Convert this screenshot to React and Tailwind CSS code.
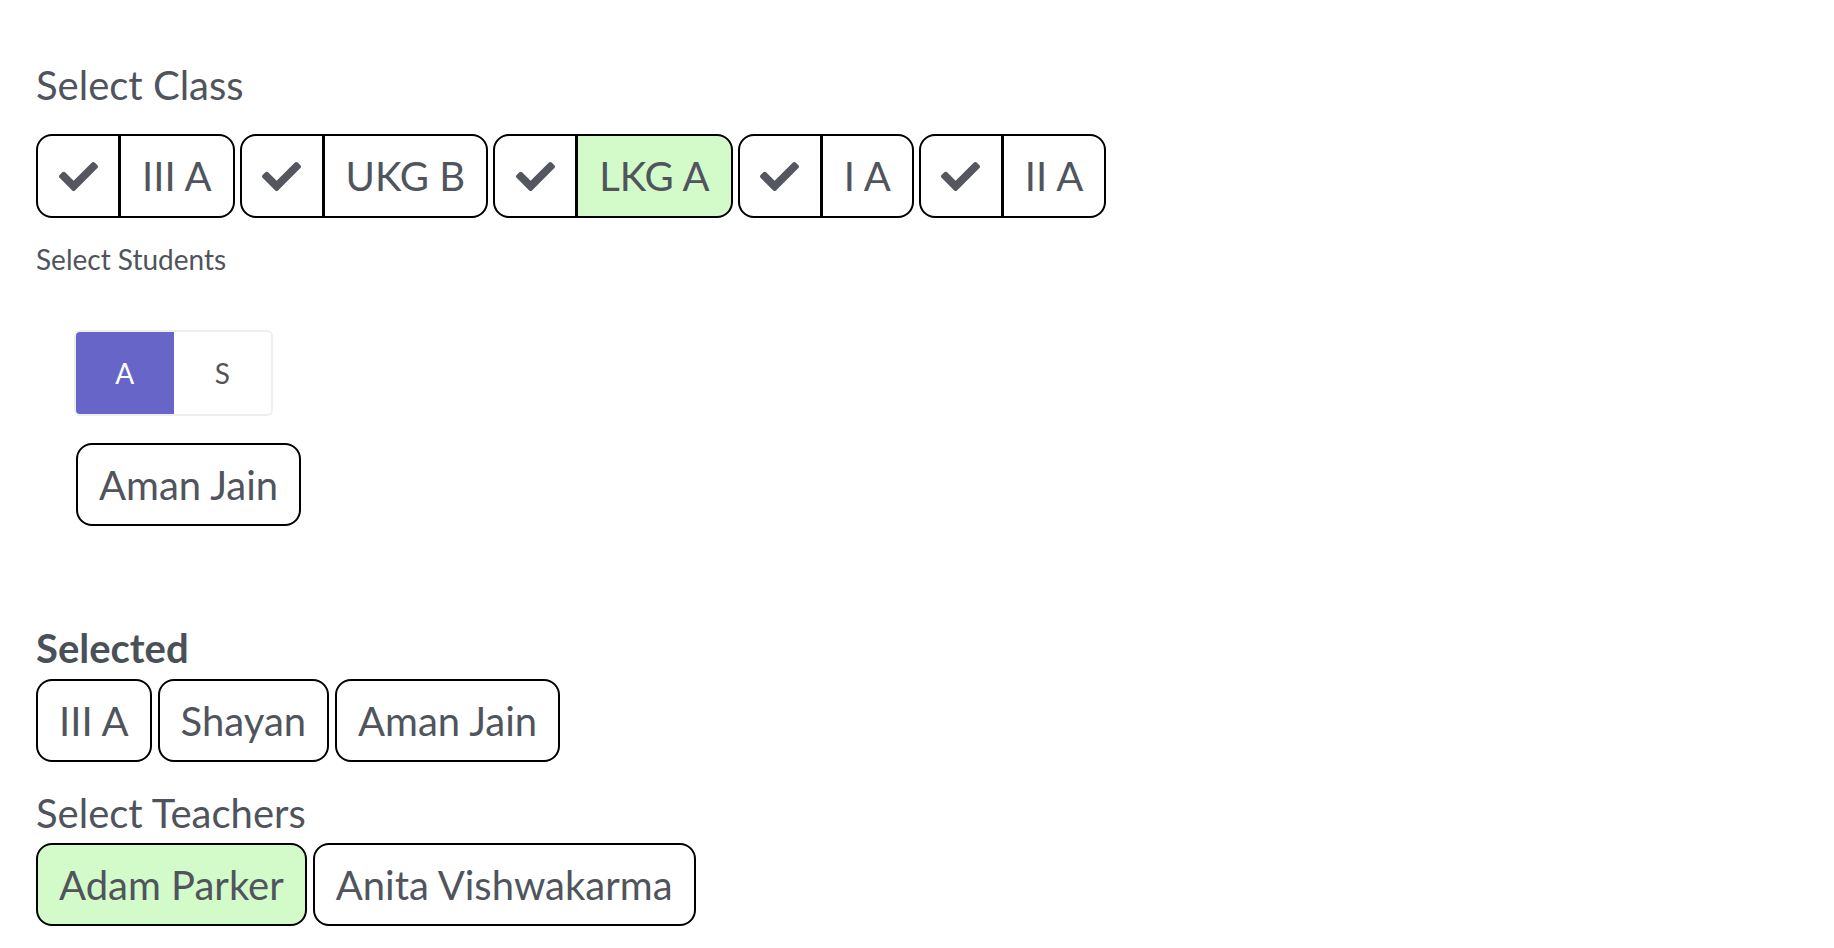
import React, { useState } from 'react';
import { FaCheck } from 'react-icons/fa';

const classes = [
    { id: 1, name: 'III A' },
    { id: 2, name: 'UKG B' },
    { id: 3, name: 'LKG A', active: true },
    { id: 4, name: 'I A' },
    { id: 5, name: 'II A' },
];

const teachers = [
    { id: 1, name: 'Adam Parker', active: true },
    { id: 2, name: 'Anita Vishwakarma' },
];

const selected = ['III A', 'Shayan', 'Aman Jain'];

// simple bordered pill used for selected items / students / teachers
const Chip = ({ label, active }) => (
    <div
        className={`h-[83px] flex items-center px-[21px] border-2 border-black rounded-[16px] text-[40px] leading-none text-[#50555d] ${active ? 'bg-[#d3fac9]' : 'bg-white'}`}
    >
        {label}
    </div>
);

const ClassChip = ({ name, active }) => (
    <div className="flex h-[84px]">
        <div className="w-[84px] flex items-center justify-center border-2 border-black rounded-l-[16px] bg-white">
            <FaCheck className="w-[39px] h-[39px] text-[#55575f]" />
        </div>
        <div
            className={`flex items-center px-[21px] border-y-2 border-r-2 border-l border-black rounded-r-[16px] text-[40px] leading-none text-[#50555d] ${active ? 'bg-[#d3fac9]' : 'bg-white'}`}
        >
            {name}
        </div>
    </div>
);

export default function App() {
    const [tab, setTab] = useState('A');

    return (
        <div
            className="min-h-screen bg-white pl-[36px] pt-[60px] text-[#4f545c]"
            style={{ fontFamily: 'Lato, "Open Sans", sans-serif' }}
        >
            {/* Class picker */}
            <h2 className="text-[40px] leading-[50px]">Select Class</h2>
            <div className="flex gap-[5px] mt-[24px]">
                {classes.map(c => (
                    <ClassChip key={c.id} name={c.name} active={c.active} />
                ))}
            </div>

            <p className="text-[28px] leading-[36px] mt-[23px]">Select Students</p>

            <div className="pl-[38px] mt-[53px]">
                <div className="flex w-[199px] h-[86px] rounded-[6px] overflow-hidden border-2 border-[#eeeeee]">
                    <button
                        onClick={() => setTab('A')}
                        className={`flex-1 flex items-center justify-center text-[28px] ${tab === 'A' ? 'bg-[#6865c9] text-white' : 'bg-white text-[#555]'}`}
                    >
                        A
                    </button>
                    <button
                        onClick={() => setTab('S')}
                        className={`flex-1 flex items-center justify-center text-[28px] ${tab === 'S' ? 'bg-[#6865c9] text-white' : 'bg-white text-[#555]'}`}
                    >
                        S
                    </button>
                </div>
                <div className="flex mt-[27px] pl-[2px]">
                    <Chip label="Aman Jain" />
                </div>
            </div>

            {/* Selected */}
            <h3 className="text-[40px] leading-[50px] font-bold text-[#4a5058] mt-[97px]">Selected</h3>
            <div className="flex gap-[6px] mt-[6px]">
                {selected.map(s => (
                    <Chip key={s} label={s} />
                ))}
            </div>

            <h2 className="text-[40px] leading-[50px] mt-[26px]">Select Teachers</h2>
            <div className="flex gap-[6px] mt-[5px]">
                {teachers.map(t => (
                    <Chip key={t.id} label={t.name} active={t.active} />
                ))}
            </div>
        </div>
    );
}
